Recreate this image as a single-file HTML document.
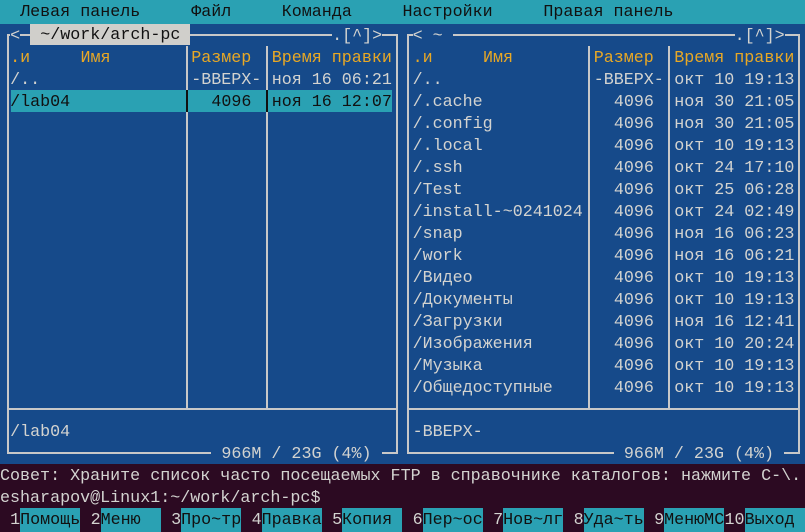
<!DOCTYPE html>
<html><head><meta charset="utf-8"><style>
html,body{margin:0;padding:0}
body{width:805px;height:531px;overflow:hidden;background:#2c0a22;position:relative;font-family:"Liberation Mono","DejaVu Sans Mono",monospace;font-size:16.7px;}
.t{position:absolute;left:calc(var(--c)*10.0625px);top:calc(var(--r)*22px + 4px);height:22px;line-height:22px;white-space:pre;color:#d3d3d0}
.y{color:#e8a825}
.k{color:#111}
.m{background:#164a8a}
.bar{position:absolute;background:#2aa1b3}
.blue{position:absolute;left:0;top:24px;width:805px;height:440px;background:#164a8a}
.h{position:absolute;height:2px;background:#c8c8c8}
.v{position:absolute;width:2px;background:#c8c8c8}
.vd{position:absolute;width:2px;background:#111}
.kb{background:#2aa1b3;width:60px;top:calc(var(--r)*22px + 2px);padding-top:2px}
</style></head><body>
<div class="bar" style="left:0;top:0;width:805px;height:24px"></div>
<div class="blue"></div>
<div class="h" style="left:7px;top:34px;width:391px"></div>
<div class="h" style="left:7px;top:452px;width:391px"></div>
<div class="h" style="left:7px;top:408px;width:391px"></div>
<div class="v" style="left:7px;top:34px;height:420px"></div>
<div class="v" style="left:396px;top:34px;height:420px"></div>
<div class="v" style="left:186px;top:46px;height:362px"></div>
<div class="v" style="left:266px;top:46px;height:362px"></div>
<div class="h" style="left:407px;top:34px;width:393px"></div>
<div class="h" style="left:407px;top:452px;width:393px"></div>
<div class="h" style="left:407px;top:408px;width:393px"></div>
<div class="v" style="left:407px;top:34px;height:420px"></div>
<div class="v" style="left:798px;top:34px;height:420px"></div>
<div class="v" style="left:588px;top:46px;height:362px"></div>
<div class="v" style="left:668px;top:46px;height:362px"></div>
<div class="bar" style="left:11px;top:90px;width:381px;height:22px"></div>
<div class="vd" style="left:186px;top:90px;height:22px"></div>
<div class="vd" style="left:266px;top:90px;height:22px"></div>

<span class="t k" style="--c:2;--r:0;top:2px">Левая панель</span>
<span class="t k" style="--c:19;--r:0;top:2px">Файл</span>
<span class="t k" style="--c:28;--r:0;top:2px">Команда</span>
<span class="t k" style="--c:40;--r:0;top:2px">Настройки</span>
<span class="t k" style="--c:54;--r:0;top:2px">Правая панель</span>

<span class="t m" style="--c:1;--r:1">&lt;</span>
<span class="t k" style="--c:3;--r:1;background:#d0cfcb;top:24px;height:20px;line-height:22px;padding-top:1px"> ~/work/arch-pc </span>
<span class="t m" style="--c:33;--r:1">.[^]&gt;</span>
<span class="t y" style="--c:1;--r:2">.и</span>
<span class="t y" style="--c:8;--r:2">Имя</span>
<span class="t y" style="--c:19;--r:2">Размер</span>
<span class="t y" style="--c:27;--r:2">Время правки</span>
<span class="t" style="--c:1;--r:3">/..</span>
<span class="t" style="--c:19;--r:3">-ВВЕРХ-</span>
<span class="t" style="--c:27;--r:3">ноя 16 06:21</span>
<span class="t k" style="--c:1;--r:4">/lab04</span>
<span class="t k" style="--c:21;--r:4">4096</span>
<span class="t k" style="--c:27;--r:4">ноя 16 12:07</span>
<span class="t" style="--c:1;--r:19">/lab04</span>
<span class="t m" style="--c:21;--r:20;height:18px"> 966M / 23G (4%) </span>

<span class="t m" style="--c:41;--r:1">&lt;</span>
<span class="t m" style="--c:42;--r:1"> ~ </span>
<span class="t m" style="--c:73;--r:1">.[^]&gt;</span>
<span class="t y" style="--c:41;--r:2">.и</span>
<span class="t y" style="--c:48;--r:2">Имя</span>
<span class="t y" style="--c:59;--r:2">Размер</span>
<span class="t y" style="--c:67;--r:2">Время правки</span>
<span class="t" style="--c:41;--r:3">/..</span><span class="t" style="--c:59;--r:3">-ВВЕРХ-</span><span class="t" style="--c:67;--r:3">окт 10 19:13</span>
<span class="t" style="--c:41;--r:4">/.cache</span><span class="t" style="--c:61;--r:4">4096</span><span class="t" style="--c:67;--r:4">ноя 30 21:05</span>
<span class="t" style="--c:41;--r:5">/.config</span><span class="t" style="--c:61;--r:5">4096</span><span class="t" style="--c:67;--r:5">ноя 30 21:05</span>
<span class="t" style="--c:41;--r:6">/.local</span><span class="t" style="--c:61;--r:6">4096</span><span class="t" style="--c:67;--r:6">окт 10 19:13</span>
<span class="t" style="--c:41;--r:7">/.ssh</span><span class="t" style="--c:61;--r:7">4096</span><span class="t" style="--c:67;--r:7">окт 24 17:10</span>
<span class="t" style="--c:41;--r:8">/Test</span><span class="t" style="--c:61;--r:8">4096</span><span class="t" style="--c:67;--r:8">окт 25 06:28</span>
<span class="t" style="--c:41;--r:9">/install-~0241024</span><span class="t" style="--c:61;--r:9">4096</span><span class="t" style="--c:67;--r:9">окт 24 02:49</span>
<span class="t" style="--c:41;--r:10">/snap</span><span class="t" style="--c:61;--r:10">4096</span><span class="t" style="--c:67;--r:10">ноя 16 06:23</span>
<span class="t" style="--c:41;--r:11">/work</span><span class="t" style="--c:61;--r:11">4096</span><span class="t" style="--c:67;--r:11">ноя 16 06:21</span>
<span class="t" style="--c:41;--r:12">/Видео</span><span class="t" style="--c:61;--r:12">4096</span><span class="t" style="--c:67;--r:12">окт 10 19:13</span>
<span class="t" style="--c:41;--r:13">/Документы</span><span class="t" style="--c:61;--r:13">4096</span><span class="t" style="--c:67;--r:13">окт 10 19:13</span>
<span class="t" style="--c:41;--r:14">/Загрузки</span><span class="t" style="--c:61;--r:14">4096</span><span class="t" style="--c:67;--r:14">ноя 16 12:41</span>
<span class="t" style="--c:41;--r:15">/Изображения</span><span class="t" style="--c:61;--r:15">4096</span><span class="t" style="--c:67;--r:15">окт 10 20:24</span>
<span class="t" style="--c:41;--r:16">/Музыка</span><span class="t" style="--c:61;--r:16">4096</span><span class="t" style="--c:67;--r:16">окт 10 19:13</span>
<span class="t" style="--c:41;--r:17">/Общедоступные</span><span class="t" style="--c:61;--r:17">4096</span><span class="t" style="--c:67;--r:17">окт 10 19:13</span>
<span class="t" style="--c:41;--r:19">-ВВЕРХ-</span>
<span class="t m" style="--c:61;--r:20;height:18px"> 966M / 23G (4%) </span>

<span class="t" style="--c:0;--r:21">Совет: Храните список часто посещаемых FTP в справочнике каталогов: нажмите C-\.</span>
<span class="t" style="--c:0;--r:22">esharapov@Linux1:~/work/arch-pc$</span>
<span class="t" style="--c:1;--r:23">1</span><span class="t k kb" style="--c:2;--r:23">Помощь</span>
<span class="t" style="--c:9;--r:23">2</span><span class="t k kb" style="--c:10;--r:23">Меню</span>
<span class="t" style="--c:17;--r:23">3</span><span class="t k kb" style="--c:18;--r:23">Про~тр</span>
<span class="t" style="--c:25;--r:23">4</span><span class="t k kb" style="--c:26;--r:23">Правка</span>
<span class="t" style="--c:33;--r:23">5</span><span class="t k kb" style="--c:34;--r:23">Копия</span>
<span class="t" style="--c:41;--r:23">6</span><span class="t k kb" style="--c:42;--r:23">Пер~ос</span>
<span class="t" style="--c:49;--r:23">7</span><span class="t k kb" style="--c:50;--r:23">Нов~лг</span>
<span class="t" style="--c:57;--r:23">8</span><span class="t k kb" style="--c:58;--r:23">Уда~ть</span>
<span class="t" style="--c:65;--r:23">9</span><span class="t k kb" style="--c:66;--r:23">МенюMC</span>
<span class="t" style="--c:72;--r:23">10</span><span class="t k kb" style="--c:74;--r:23;width:61px">Выход</span>
</body></html>
